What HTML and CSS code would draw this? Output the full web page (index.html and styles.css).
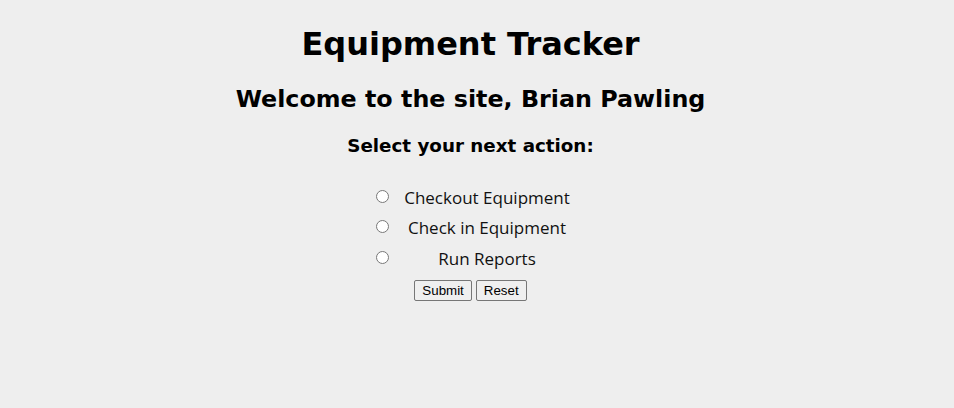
FILE: index.html
```html
<!DOCTYPE html>
<html>
<head>
<meta charset="utf-8">
<title>Equipment Tracker</title>
<link rel="stylesheet" href="styles.css">
</head>
<body>
<div class="page">
  <h1 class="title">Equipment Tracker</h1>
  <h2 class="welcome">Welcome to the site, Brian Pawling</h2>
  <h3 class="prompt">Select your next action:</h3>
  <form class="actions">
    <div class="options">
      <label class="radio-cell"><input type="radio" name="action" value="checkout"></label>
      <span class="label-cell">Checkout Equipment</span>
      <label class="radio-cell"><input type="radio" name="action" value="checkin"></label>
      <span class="label-cell">Check in Equipment</span>
      <label class="radio-cell"><input type="radio" name="action" value="reports"></label>
      <span class="label-cell">Run Reports</span>
    </div>
    <div class="buttons">
      <button type="submit" class="btn">Submit</button>
      <button type="reset" class="btn">Reset</button>
    </div>
  </form>
</div>
</body>
</html>
```

FILE: styles.css
```css
html, body {
  margin: 0;
  padding: 0;
  background: #eeeeee;
}
.page {
  width: 941px;
  text-align: center;
  color: #000;
  font-family: "DejaVu Sans", Verdana, sans-serif;
  padding-top: 22px;
}
.title {
  font-size: 32px;
  font-weight: bold;
  margin: 0;
  line-height: 44px;
}
.welcome {
  font-size: 23.8px;
  font-weight: bold;
  margin: 17px 0 0;
  line-height: 32px;
}
.prompt {
  font-size: 18.3px;
  font-weight: bold;
  margin: 19px 0 0;
  line-height: 24px;
}
.actions {
  margin-top: 23px;
}
.options {
  display: grid;
  grid-template-columns: 33px 177px;
  grid-auto-rows: 30.5px;
  width: 210px;
  margin: 0 auto;
}
.radio-cell {
  display: flex;
  align-items: center;
  justify-content: center;
}
.radio-cell input {
  margin: 0;
  width: 13px;
  height: 13px;
}
.label-cell {
  display: flex;
  align-items: center;
  justify-content: center;
  font-family: "Open Sans", "Noto Sans", sans-serif;
  font-size: 17px;
  color: #111;
  padding-top: 2px;
}
.buttons {
  display: flex;
  justify-content: center;
  gap: 4px;
  margin-top: 7px;
}
.btn {
  font-family: "Liberation Sans", Arial, sans-serif;
  font-size: 13.33px;
  padding: 1px 7px;
  height: 21px;
  background: #efefef;
  border: 1px solid #767676;
  border-radius: 2px;
  color: #000;
}
```
